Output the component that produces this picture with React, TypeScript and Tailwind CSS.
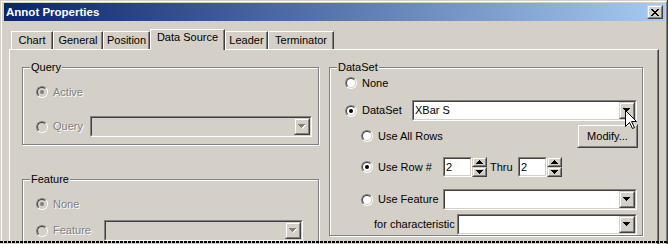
import React from "react";

const face = "bg-[#d4d0c8]";
const dim = "text-[#808080] [text-shadow:1px_1px_0_#fff]";

function Radio({ checked, disabled }: { checked?: boolean; disabled?: boolean }) {
    return (
        <span className="flex h-[12px] w-[12px] shrink-0 rounded-full border border-t-[#808080] border-l-[#808080] border-r-white border-b-white">
            <span
                className={`flex h-[10px] w-[10px] items-center justify-center rounded-full border border-t-[#404040] border-l-[#404040] border-r-[#d4d0c8] border-b-[#d4d0c8] ${
                    disabled ? face : "bg-white"
                }`}
            >
                {checked && (
                    <span className={`h-[4px] w-[4px] rounded-full ${disabled ? "bg-[#808080]" : "bg-black"}`} />
                )}
            </span>
        </span>
    );
}

function Arrow({ up, disabled }: { up?: boolean; disabled?: boolean }) {
    const d = up
        ? "M3 0h1v1h1v1h1v1h1v1h-7v-1h1v-1h1v-1h1z"
        : "M0 0h7v1h-1v1h-1v1h-1v1h-1v-1h-1v-1h-1v-1h-1z";
    return (
        <svg width="8" height="5" viewBox="0 0 8 5" shapeRendering="crispEdges">
            {disabled && <path d={d} fill="#fff" transform="translate(1 1)" />}
            <path d={d} fill={disabled ? "#808080" : "#000"} />
        </svg>
    );
}

function Raised({ className, children }: { className?: string; children?: React.ReactNode }) {
    return (
        <div className={`shrink-0 border border-t-[#d4d0c8] border-l-[#d4d0c8] border-r-[#404040] border-b-[#404040] ${face} ${className ?? ""}`}>
            <div className="flex h-full w-full items-center justify-center border border-t-white border-l-white border-r-[#808080] border-b-[#808080]">
                {children}
            </div>
        </div>
    );
}

function Sunken({
    className,
    disabled,
    children,
}: {
    className?: string;
    disabled?: boolean;
    children?: React.ReactNode;
}) {
    return (
        <div className={`shrink-0 border border-t-[#808080] border-l-[#808080] border-r-white border-b-white ${className ?? ""}`}>
            <div
                className={`flex h-full w-full items-stretch border border-t-[#404040] border-l-[#404040] border-r-[#d4d0c8] border-b-[#d4d0c8] ${
                    disabled ? face : "bg-white"
                }`}
            >
                {children}
            </div>
        </div>
    );
}

function Combo({ className, disabled, value }: { className?: string; disabled?: boolean; value?: string }) {
    return (
        <Sunken className={`h-[21px] ${className ?? ""}`} disabled={disabled}>
            <span className="flex flex-1 items-center pl-[1px] leading-[13px] text-black">{value}</span>
            <Raised className="h-[17px] w-[16px]">
                <Arrow disabled={disabled} />
            </Raised>
        </Sunken>
    );
}

function Spin() {
    return (
        <div className="flex h-[20px]">
            <Sunken className="h-[20px] w-[29px]">
                <span className="flex items-center pl-[1px] leading-[13px]">2</span>
            </Sunken>
            <div className="flex w-[15px] flex-col">
                <Raised className="h-[10px] w-[15px]">
                    <Arrow up />
                </Raised>
                <Raised className="h-[10px] w-[15px]">
                    <Arrow />
                </Raised>
            </div>
        </div>
    );
}

function Group({ label, className, children }: { label: string; className?: string; children?: React.ReactNode }) {
    return (
        <div className={`relative shrink-0 border border-[#808080] shadow-[inset_1px_1px_0_#fff,1px_1px_0_#fff] ${className ?? ""}`}>
            <span className={`absolute -top-[7px] left-[7px] px-[1px] leading-[13px] ${face}`}>{label}</span>
            {children}
        </div>
    );
}

function Option({
    label,
    checked,
    disabled,
    labelWidth,
    className,
    children,
}: {
    label: string;
    checked?: boolean;
    disabled?: boolean;
    labelWidth?: string;
    className?: string;
    children?: React.ReactNode;
}) {
    return (
        <div className={`flex shrink-0 items-center ${className ?? ""}`}>
            <Radio checked={checked} disabled={disabled} />
            <span className={`ml-[5px] shrink-0 leading-[13px] ${disabled ? dim : ""} ${labelWidth ?? ""}`}>{label}</span>
            {children}
        </div>
    );
}

function CloseGlyph() {
    const rows = ["11000011", "01100110", "00111100", "00011000", "00111100", "01100110", "11000011"];
    return (
        <svg width="8" height="7" viewBox="0 0 8 7" shapeRendering="crispEdges">
            {rows.flatMap((r, y) =>
                r.split("").map((c, x) => (c === "1" ? <rect key={`${x}-${y}`} x={x} y={y} width="1" height="1" fill="#000" /> : null))
            )}
        </svg>
    );
}

function Cursor() {
    return (
        <svg className="absolute left-[625px] top-[110px]" width="13" height="20" viewBox="0 0 13 20">
            <path
                d="M0.5 0.5 L0.5 16.5 L4.5 12.5 L7.5 18.5 L9.5 17.5 L6.5 11.5 L11.5 11.5 Z"
                fill="#fff"
                stroke="#000"
                strokeWidth="1"
            />
        </svg>
    );
}

const tabs = [
    { name: "Chart", w: "w-[42px]" },
    { name: "General", w: "w-[50px]" },
    { name: "Position", w: "w-[47px]" },
    { name: "Data Source", w: "w-[75px]", active: true },
    { name: "Leader", w: "w-[43px]" },
    { name: "Terminator", w: "w-[66px]" },
];

export default function App() {
    return (
        <div className="relative h-[244px] w-[668px] overflow-hidden border-r border-r-[#404040] bg-[#d4d0c8] pl-[1px] pt-[1px] font-['Liberation_Sans',Arial,sans-serif] text-[11px] text-black">
            <div className="flex flex-col border-l border-t border-r border-white border-r-[#808080] pl-[2px] pr-[1px] pt-[1px]">
                {/* Title bar */}
                <div className="flex h-[18px] shrink-0 items-center justify-between bg-[linear-gradient(90deg,#0a246a,#a6caf0)] pl-[2px] pr-[2px]">
                    <span className="text-[11.5px] font-bold leading-[13px] text-white">Annot Properties</span>
                    <Raised className="h-[14px] w-[16px]">
                        <CloseGlyph />
                    </Raised>
                </div>

                {/* Tabs */}
                <div className="ml-[7px] mt-[8px] flex h-[20px] shrink-0 items-start">
                    {tabs.map((t) =>
                        t.active ? (
                            <div
                                key={t.name}
                                className={`relative z-10 flex h-[21px] justify-center border-l border-t border-white pt-[1px] shadow-[inset_-1px_0_0_#808080] ${face} border-r border-r-[#404040] ${t.w}`}
                            >
                                <span className="leading-[13px]">{t.name}</span>
                            </div>
                        ) : (
                            <div
                                key={t.name}
                                className={`mt-[2px] flex h-[18px] items-center justify-center border-l border-t border-white border-r border-r-[#404040] shadow-[inset_-1px_0_0_#808080] ${t.w}`}
                            >
                                <span className="leading-[13px]">{t.name}</span>
                            </div>
                        )
                    )}
                </div>

                {/* Panel */}
                <div className="ml-[5px] mr-[6px] flex shrink-0 gap-[10px] border-l border-t border-r border-white border-r-[#404040] pl-[12px] pt-[17px] shadow-[inset_-1px_0_0_#808080]">
                    <div className="flex w-[297px] shrink-0 flex-col">
                        <Group label="Query" className="h-[78px]">
                            <div className="flex flex-col pl-[13px]">
                                <Option label="Active" checked disabled className="mt-[17px] h-[14px]" />
                                <Option label="Query" disabled labelWidth="w-[37px]" className="mt-[17px] h-[21px]">
                                    <Combo disabled className="w-[222px]" />
                                </Option>
                            </div>
                        </Group>
                        <Group label="Feature" className="mt-[34px] h-[100px]">
                            <div className="flex flex-col pl-[13px]">
                                <Option label="None" checked disabled className="mt-[17px] h-[14px]" />
                                <Option label="Feature" disabled labelWidth="w-[51px]" className="mt-[9px] h-[21px]">
                                    <Combo disabled className="w-[199px]" />
                                </Option>
                            </div>
                        </Group>
                    </div>

                    <Group label="DataSet" className="h-[169px] w-[314px]">
                        <div className="flex flex-col pl-[15px] pr-[5px]">
                            <Option label="None" className="mt-[8px] h-[14px]" />
                            <Option label="DataSet" checked labelWidth="w-[50px]" className="mt-[10px] h-[21px]">
                                <Combo value="XBar S" className="w-[225px]" />
                            </Option>
                            <div className="mt-[3px] flex h-[24px] items-center pl-[16px]">
                                <Option label="Use All Rows" />
                                <Raised className="-mr-[1px] ml-auto h-[24px] w-[61px]">
                                    <span className="leading-[13px]">Modify...</span>
                                </Raised>
                            </div>
                            <Option label="Use Row #" checked labelWidth="w-[65px]" className="mt-[9px] h-[20px] pl-[16px]">
                                <Spin />
                                <span className="ml-[3px] w-[28px] leading-[13px]">Thru</span>
                                <Spin />
                            </Option>
                            <Option label="Use Feature" labelWidth="w-[65px]" className="mt-[12px] h-[21px] pl-[16px]">
                                <Combo className="w-[194px]" />
                            </Option>
                            <div className="mt-[4px] flex h-[21px] items-center pl-[29px]">
                                <span className="w-[83px] leading-[13px]">for characteristic</span>
                                <Combo className="w-[180px]" />
                            </div>
                        </div>
                    </Group>
                </div>
            </div>

            <Cursor />
            <div className="absolute bottom-[1px] left-0 h-[2px] w-full bg-[repeating-linear-gradient(90deg,#000_0_3px,#d4d0c8_3px_4px)]" />
        </div>
    );
}
